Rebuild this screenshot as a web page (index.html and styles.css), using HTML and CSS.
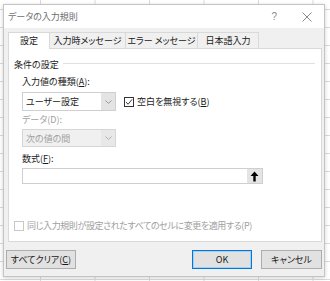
FILE: index.html
```html
<!DOCTYPE html>
<html>
<head>
  <link rel="stylesheet" href="styles.css">
</head>
<body>
  <div class="dialog">
    <div class="titlebar">
      <span class="title">データの入力規則</span>
      <span class="help">?</span>
      <span class="close"><svg width="10" height="10" viewBox="0 0 10 10"><path d="M0.5 0.5 L9.5 9.5 M9.5 0.5 L0.5 9.5" stroke="#8a8a8a" stroke-width="1" fill="none"/></svg></span>
    </div>
    <div class="content">
      <div class="tabs">
        <div class="tab active">設定</div>
        <div class="tab t2">入力時メッセージ</div>
        <div class="tab t3">エラー メッセージ</div>
        <div class="tab t4">日本語入力</div>
      </div>
      <div class="panel">
        <div class="group-title"><span>条件の設定</span><div class="rule"></div></div>
        <div class="group">
          <div class="label first">入力値の種類(<u>A</u>):</div>
          <div class="row">
            <div class="select">
              <span class="select-text">ユーザー設定</span>
              <span class="select-arrow"><svg width="7" height="4" viewBox="0 0 7 4"><path d="M0.5 0.5 L3.5 3.5 L6.5 0.5" fill="none" stroke="#9a9a9a" stroke-width="1"/></svg></span>
            </div>
            <div class="check">
              <span class="box"><svg width="9" height="8" viewBox="0 0 9 8"><path d="M1 4 L3.5 6.5 L8 1" fill="none" stroke="#333" stroke-width="1.1"/></svg></span>
              <span>空白を無視する(<u>B</u>)</span>
            </div>
          </div>
          <div class="label disabled">データ(D):</div>
          <div class="select disabled-select">
            <span class="select-text">次の値の間</span>
            <span class="select-arrow"><svg width="7" height="4" viewBox="0 0 7 4"><path d="M0.5 0.5 L3.5 3.5 L6.5 0.5" fill="none" stroke="#b0b0b0" stroke-width="1"/></svg></span>
          </div>
          <div class="label formula-label">数式(<u>F</u>):</div>
          <div class="formula">
            <span class="formula-input"></span>
            <span class="ref-btn"><svg width="9" height="11" viewBox="0 0 9 11"><path d="M4.5 0.5 L8.5 5 L5.7 5 L5.7 10.5 L3.3 10.5 L3.3 5 L0.5 5 Z" fill="#000"/></svg></span>
          </div>
        </div>
        <div class="check apply disabled">
          <span class="box off"></span>
          <span class="apply-text">同じ入力規則が設定されたすべてのセルに変更を適用する(P)</span>
        </div>
      </div>
      <div class="buttons">
        <button class="btn clear">すべてクリア(<u>C</u>)</button>
        <div class="spacer"></div>
        <button class="btn ok">OK</button>
        <button class="btn cancel">キャンセル</button>
      </div>
    </div>
  </div>
</body>
</html>
```
FILE: styles.css
```css
* {
  box-sizing: border-box;
}
body {
  margin: 0;
  width: 330px;
  height: 281px;
  overflow: hidden;
  font-family: "Noto Sans CJK JP", sans-serif;
  font-feature-settings: "palt";
  font-size: 9px;
  color: #1a1a1a;
  background-color: #fff;
  background-image:
    linear-gradient(to right, #dadada 1px, transparent 1px),
    linear-gradient(to bottom, #dadada 1px, transparent 1px);
  background-size: 54.5px 100%, 100% 18px;
  background-position: 40px 0, 0 9px;
}
.dialog {
  margin: 4px 0 0 3px;
  width: 322px;
  height: 273px;
  background: #f0f0f0;
  border: 1px solid #c4c4c4;
  box-shadow: 0 1px 4px rgba(0,0,0,0.18);
}
.titlebar {
  height: 23px;
  background: #fff;
  display: flex;
  align-items: center;
  color: #6f6f6f;
}
.title {
  flex: 1;
  padding-left: 4px;
}
.help {
  margin-right: 25px;
  font-size: 10px;
  color: #8a8a8a;
  font-family: "Liberation Sans", sans-serif;
}
.close {
  display: flex;
  margin-right: 12px;
}
.content {
  padding-top: 4px;
}
.tabs {
  display: flex;
  height: 16px;
  margin-left: 4px;
  position: relative;
  z-index: 1;
}
.tab {
  height: 16px;
  line-height: 15px;
  text-align: center;
  white-space: nowrap;
  border: 1px solid #d9d9d9;
  border-bottom: none;
  border-left: none;
  background: #f0f0f0;
}
.tab.active {
  width: 42px;
  height: 17px;
  background: #fff;
  border-left: 1px solid #d9d9d9;
}
.t2 { width: 76px; }
.t3 { width: 72px; }
.t4 { width: 61px; }
.panel {
  margin-left: 4px;
  width: 314px;
  height: 194px;
  background: #fff;
  border: 1px solid #d9d9d9;
  padding: 8px 6px 0 5px;
  display: flex;
  flex-direction: column;
}
.group-title {
  display: flex;
  align-items: center;
  height: 14px;
  gap: 4px;
}
.rule {
  flex: 1;
  height: 1px;
  background: #e0e0e0;
  margin-top: -1px;
}
.group {
  padding-left: 8px;
}
.label {
  height: 14px;
  line-height: 14px;
}
.first {
  margin-top: 4px;
}
.row {
  display: flex;
  align-items: center;
  margin-top: 3px;
}
.select {
  width: 94px;
  height: 19px;
  border: 1px solid #cfcfcf;
  display: flex;
  background: #fff;
}
.select-text {
  flex: 1;
  line-height: 17px;
  padding-left: 3px;
}
.select-arrow {
  width: 14px;
  background: #e4e4e4;
  display: flex;
  align-items: center;
  justify-content: center;
}
.disabled-select {
  height: 18px;
  margin-top: 2px;
  background: #f0f0f0;
  color: #a0a0a0;
  border-color: #d6d6d6;
}
.disabled-select .select-arrow {
  background: #e8e8e8;
}
.disabled {
  color: #a0a0a0;
}
.label.disabled {
  margin-top: 2px;
}
.formula-label {
  margin-top: 5px;
}
.check {
  display: flex;
  align-items: center;
  gap: 3px;
  margin-left: 8px;
  white-space: nowrap;
}
.box {
  width: 10px;
  height: 10px;
  border: 1px solid #333;
  background: #fff;
  display: flex;
  align-items: center;
  justify-content: center;
}
.box.off {
  border-color: #c8c8c8;
}
.formula {
  display: flex;
  width: 241px;
  height: 16px;
  border: 1px solid #cfcfcf;
  margin-top: 2px;
}
.formula-input {
  flex: 1;
}
.ref-btn {
  width: 15px;
  background: #e4e4e4;
  display: flex;
  align-items: center;
  justify-content: center;
}
.apply {
  margin: auto 0 9px 0;
}
.apply-text {
  letter-spacing: -0.4px;
}
.buttons {
  display: flex;
  margin-top: 8px;
  padding: 0 2px 0 2px;
  gap: 9px;
}
.spacer {
  flex: 1;
}
.btn {
  height: 19px;
  font-family: inherit;
  font-feature-settings: "palt";
  font-size: 9px;
  color: #1a1a1a;
  background: #e1e1e1;
  border: 1px solid #adadad;
  padding: 0;
}
.clear {
  width: 70px;
}
.ok {
  width: 60px;
  border: 1px solid #0078d7;
  box-shadow: inset 0 0 0 1px #a9cff0;
}
.cancel {
  width: 61px;
}
u {
  text-decoration: underline;
}
```
